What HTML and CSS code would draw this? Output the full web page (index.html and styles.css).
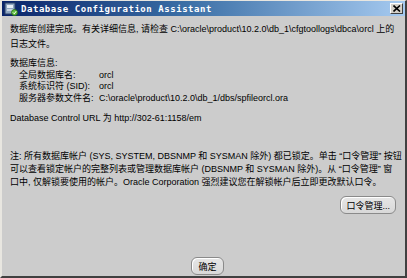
FILE: index.html
```html
<!DOCTYPE html>
<html>
<head>
<meta charset="utf-8">
<link rel="stylesheet" href="styles.css">
</head>
<body>
<div class="window">
  <div class="titlebar">
    <svg class="appicon" width="14" height="14" viewBox="0 0 14 14">
      <rect x="1" y="1" width="10" height="11" fill="#8fa6c0" stroke="#2b3f66" stroke-width="1"/>
      <rect x="3" y="3" width="6" height="3" fill="#e8eef6"/>
      <rect x="3" y="7" width="6" height="2" fill="#c8d4e2"/>
      <circle cx="10.5" cy="10.5" r="3" fill="#5cbf3a" stroke="#2a6a1a" stroke-width="0.8"/>
      <path d="M9 10.5 L10.3 11.8 L12.2 9.2" stroke="#fff" stroke-width="1" fill="none"/>
    </svg>
    <span class="title">Database Configuration Assistant</span>
    <span class="closebtn">
      <svg width="8" height="7" viewBox="0 0 8 7"><path d="M0.5 0.5 L7 6.5 M7 0.5 L0.5 6.5" stroke="#000" stroke-width="1.6"/></svg>
    </span>
  </div>
  <div class="content">
    <p class="p1">数据库创建完成。有关详细信息, 请检查 C:\oracle\product\10.2.0\db_1\cfgtoollogs\dbca\orcl 上的<br>日志文件。</p>
    <div class="info">
      <div class="info-head">数据库信息:</div>
      <div class="info-grid">
        <span>全局数据库名:</span><span>orcl</span>
        <span>系统标识符 (SID):</span><span>orcl</span>
        <span>服务器参数文件名:</span><span>C:\oracle\product\10.2.0\db_1/dbs/spfileorcl.ora</span>
      </div>
    </div>
    <p class="url">Database Control URL 为 http://302-61:1158/em</p>
    <p class="note">注: 所有数据库帐户 (SYS, SYSTEM, DBSNMP 和 SYSMAN 除外) 都已锁定。单击 “口令管理” 按钮<br>可以查看锁定帐户的完整列表或管理数据库帐户 (DBSNMP 和 SYSMAN 除外)。从 “口令管理” 窗<br>口中, 仅解锁要使用的帐户。Oracle Corporation 强烈建议您在解锁帐户后立即更改默认口令。</p>
    <div class="pwrow"><button class="btn">口令管理...</button></div>
    <div class="okrow"><button class="btn ok">确定</button></div>
  </div>
</div>
</body>
</html>
```
FILE: styles.css
```css
html, body {
  margin: 0;
  padding: 0;
  background: #cccccc;
}
.window {
  width: 407px;
  height: 278px;
  box-sizing: border-box;
  border-left: 2px solid #e8e6e0;
  border-top: 1px solid #e8e6e0;
  border-right: 2px solid #404040;
  border-bottom: 2px solid #404040;
  background: #cccccc;
  display: flex;
  flex-direction: column;
  font-family: "Liberation Sans", "Noto Sans CJK SC", sans-serif;
  font-size: 9px;
  color: #000;
}
.titlebar {
  height: 15px;
  background: linear-gradient(to right, #0a246a 0%, #3a6ea5 45%, #a6caf0 100%);
  display: flex;
  align-items: center;
  padding: 0 2px 0 2px;
}
.appicon { flex: none; }
.title {
  color: #fff;
  font-family: "DejaVu Sans Mono", monospace;
  font-weight: bold;
  font-size: 9px;
  margin-left: 3px;
  flex: 1;
  letter-spacing: 0.55px;
}
.closebtn {
  width: 13px;
  height: 11px;
  box-sizing: border-box;
  background: #d4d0c8;
  border-top: 1px solid #fff;
  border-left: 1px solid #fff;
  border-right: 1px solid #404040;
  border-bottom: 1px solid #404040;
  display: flex;
  align-items: center;
  justify-content: center;
}
.content {
  flex: 1;
  padding: 6px 0 0 8px;
  display: flex;
  flex-direction: column;
}
p { margin: 0; }
.p1 { line-height: 15px; }
.info { margin-top: 6px; line-height: 11.5px; }
.info-grid {
  display: grid;
  grid-template-columns: 80px auto;
  padding-left: 9px;
}
.url { margin-top: 8px; line-height: 12px; }
.note { margin-top: 26px; line-height: 13px; }
.pwrow {
  display: flex;
  justify-content: flex-end;
  padding-right: 9px;
  margin-top: 7px;
}
.btn {
  font-family: "Liberation Sans", "Noto Sans CJK SC", sans-serif;
  font-size: 9px;
  color: #000;
  background: linear-gradient(#e6e6e6, #d8d8d8);
  border: 1px solid #8a8a8a;
  border-radius: 6px;
  height: 18px;
  padding: 0 5px;
  box-shadow: inset 1px 1px 0 #fff;
}
.okrow {
  margin-top: auto;
  display: flex;
  justify-content: center;
  padding-bottom: 1px;
}
.ok { padding: 0 6px; }
```
